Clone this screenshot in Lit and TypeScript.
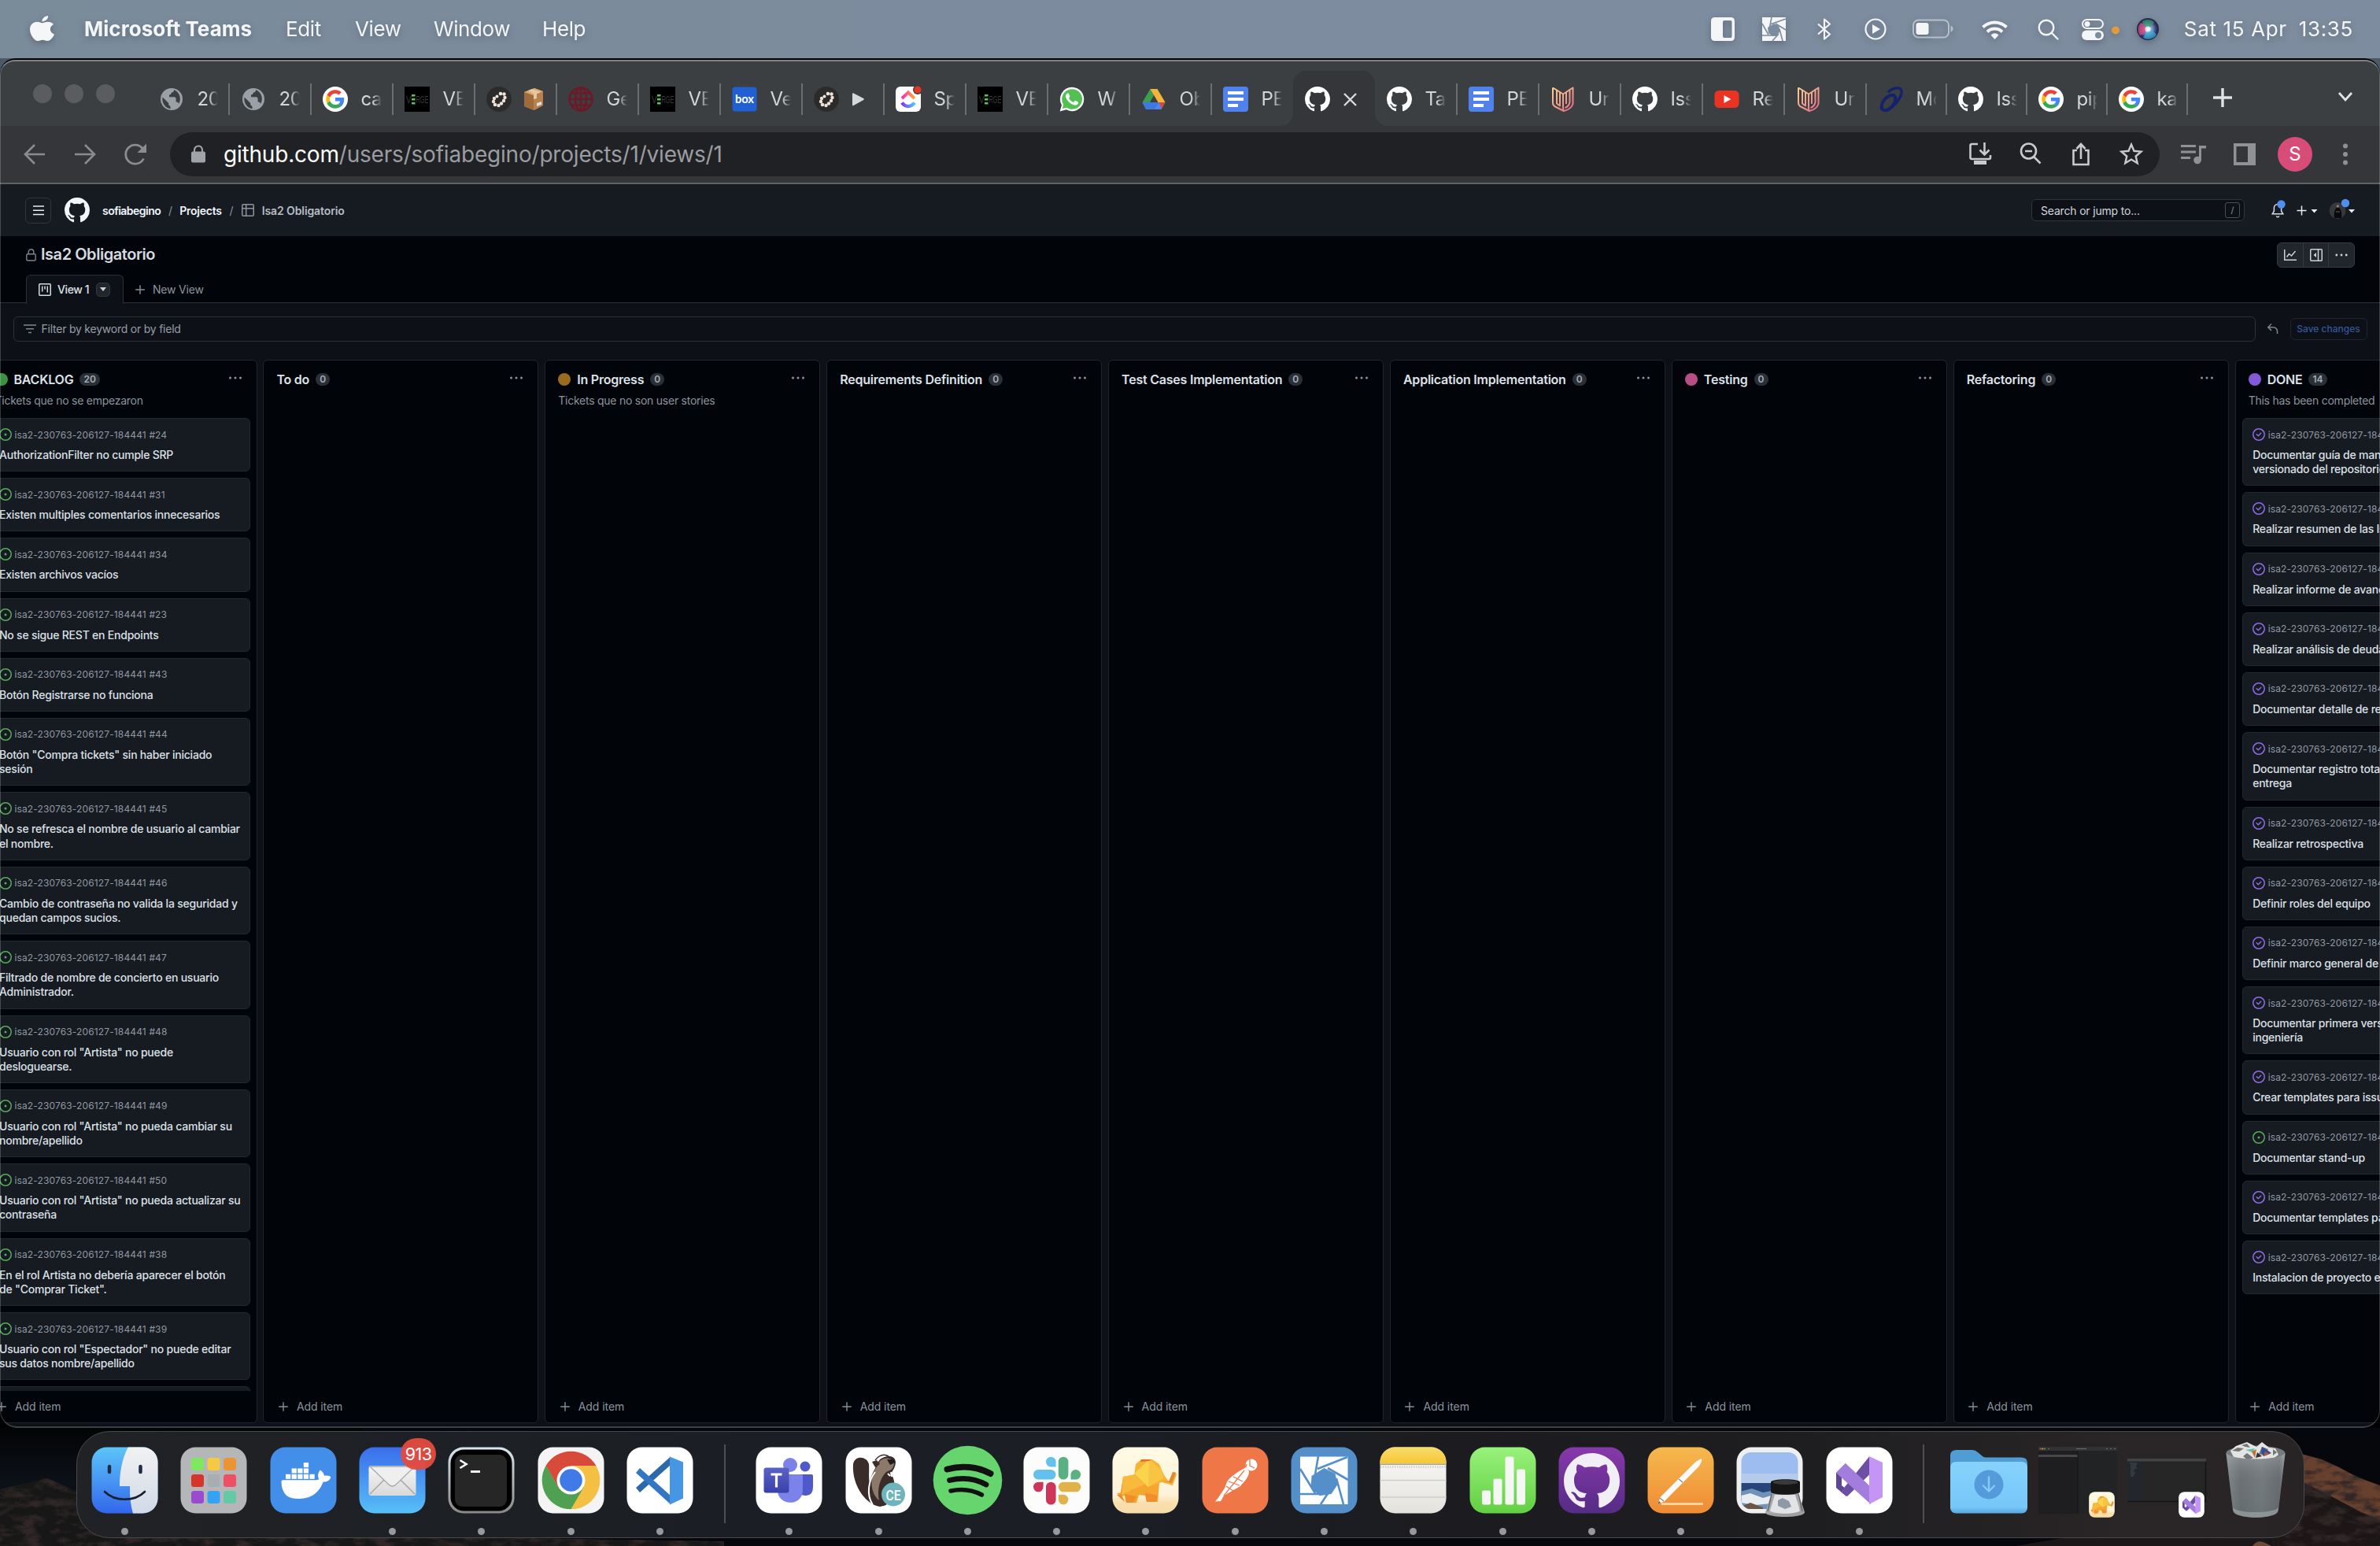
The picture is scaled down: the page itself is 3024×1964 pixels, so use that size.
import { LitElement, html, css, svg, nothing } from "lit";
import { customElement, property } from "lit/decorators.js";

/* ---------- shared glyphs ---------- */

const OCTOCAT =
  "M8 0c4.42 0 8 3.58 8 8a8.013 8.013 0 0 1-5.45 7.59c-.4.08-.55-.17-.55-.38 0-.27.01-1.13.01-2.2 0-.75-.25-1.23-.54-1.48 1.78-.2 3.65-.88 3.65-3.95 0-.88-.31-1.59-.82-2.15.08-.2.36-1.02-.08-2.12 0 0-.67-.22-2.2.82-.64-.18-1.32-.27-2-.27-.68 0-1.36.09-2 .27-1.53-1.03-2.2-.82-2.2-.82-.44 1.1-.16 1.92-.08 2.12-.51.56-.82 1.28-.82 2.15 0 3.06 1.86 3.75 3.64 3.95-.23.2-.44.55-.51 1.07-.46.21-1.61.55-2.33-.66-.15-.24-.6-.83-1.23-.82-.67.01-.27.38.01.53.34.19.73.9.82 1.13.16.45.68 1.31 2.69.94 0 .67.01 1.3.01 1.49 0 .21-.15.45-.55.38A7.995 7.995 0 0 1 0 8c0-4.42 3.58-8 8-8Z";

const octocat = (size: number, color = "#fff") =>
  html`<svg width=${size} height=${size} viewBox="0 0 16 16"><path fill=${color} d=${OCTOCAT} /></svg>`;

const issueOpen = html`<svg width="16" height="16" viewBox="0 0 16 16" fill="#57ab5a">
  <path d="M8 9.5a1.5 1.5 0 1 0 0-3 1.5 1.5 0 0 0 0 3Z" />
  <path d="M8 0a8 8 0 1 1 0 16A8 8 0 0 1 8 0ZM1.5 8a6.5 6.5 0 1 0 13 0 6.5 6.5 0 0 0-13 0Z" />
</svg>`;

const issueClosed = html`<svg width="16" height="16" viewBox="0 0 16 16" fill="#8f6be8">
  <path d="M11.28 6.78a.75.75 0 0 0-1.06-1.06L7.25 8.69 5.78 7.22a.75.75 0 0 0-1.06 1.06l2 2a.75.75 0 0 0 1.06 0l3.5-3.5Z" />
  <path d="M16 8A8 8 0 1 1 0 8a8 8 0 0 1 16 0Zm-1.5 0a6.5 6.5 0 1 0-13 0 6.5 6.5 0 0 0 13 0Z" />
</svg>`;

const kebab = html`<svg width="16" height="16" viewBox="0 0 16 16" fill="#8b949e">
  <circle cx="1.5" cy="8" r="1.5" /><circle cx="8" cy="8" r="1.5" /><circle cx="14.5" cy="8" r="1.5" />
</svg>`;

const plus = (color = "#858e99") => html`<svg width="16" height="16" viewBox="0 0 16 16">
  <path d="M8 2.2v11.6M2.2 8h11.6" stroke=${color} stroke-width="1.4" fill="none" />
</svg>`;

/* ---------- favicons ---------- */

const fav = {
  globe: html`<svg width="32" height="32" viewBox="0 0 32 32">
    <circle cx="16" cy="16" r="14" fill="#9aa0a6" />
    <path d="M4.6 13.6l7.6 7.4v2l2.3 2.4v2.9A12.4 12.4 0 0 1 4.6 13.6zM19 4c.4 2.600-1.600 3.200-3 3.600-.6 1.800-1.200 3-3 3v2.600h6.600c1.500 0 2 1.200 2 2.600v3.600c2 0 3 .6 3.600 2.400A12.500 12.500 0 0 0 19 4z" fill="#3c3f42" />
  </svg>`,
  google: html`<svg width="32" height="32" viewBox="0 0 32 32">
    <circle cx="16" cy="16" r="16" fill="#fff" />
    <g transform="translate(4.200 4.200) scale(.49)">
      <path fill="#ea4335" d="M24 9.5c3.54 0 6.71 1.22 9.21 3.6l6.85-6.85C35.9 2.38 30.47 0 24 0 14.62 0 6.51 5.38 2.56 13.22l7.98 6.19C12.43 13.72 17.74 9.5 24 9.5z" />
      <path fill="#4285f4" d="M46.98 24.55c0-1.57-.15-3.09-.38-4.55H24v9.02h12.94c-.58 2.96-2.26 5.48-4.78 7.18l7.73 6c4.51-4.18 7.09-10.36 7.09-17.65z" />
      <path fill="#fbbc05" d="M10.53 28.59c-.48-1.45-.76-2.99-.76-4.59s.27-3.14.76-4.59l-7.98-6.19C.92 16.46 0 20.12 0 24c0 3.88.92 7.54 2.56 10.78l7.97-6.19z" />
      <path fill="#34a853" d="M24 48c6.48 0 11.93-2.13 15.89-5.81l-7.73-6c-2.15 1.45-4.92 2.3-8.16 2.3-6.26 0-11.57-4.22-13.47-9.91l-7.98 6.19C6.51 42.62 14.62 48 24 48z" />
    </g>
  </svg>`,
  verge: html`<svg width="32" height="32" viewBox="0 0 32 32">
    <rect width="32" height="32" fill="#000" />
    <text x="2" y="21" font-family="Liberation Sans" font-size="13" fill="#3a3a3a" textLength="6.500" lengthAdjust="spacingAndGlyphs">V</text>
    <g fill="#57c84a"><rect x="9" y="10" width="4.500" height="2.500" /><rect x="9" y="15" width="4.500" height="2.500" /><rect x="9" y="20" width="4.500" height="2.500" /></g>
    <text x="14.500" y="21" font-family="Liberation Sans" font-size="13" fill="#3a3a3a" textLength="16" lengthAdjust="spacingAndGlyphs">RGE</text>
  </svg>`,
  beads: html`<svg width="32" height="32" viewBox="0 0 32 32">
    <circle cx="16" cy="16" r="16" fill="#2b2b2b" />
    <g fill="#efe3d6">
      <circle cx="18" cy="9" r="2.300" /><circle cx="22.500" cy="9.500" r="2.200" /><circle cx="23.500" cy="14" r="2.200" /><circle cx="22" cy="18" r="2.200" />
      <circle cx="19" cy="21.500" r="2.200" /><circle cx="15.500" cy="24" r="2.200" /><circle cx="11" cy="23" r="2.300" /><circle cx="9" cy="19" r="2.200" />
      <circle cx="10" cy="15" r="2.200" /><circle cx="13.500" cy="12.500" r="2" />
    </g>
  </svg>`,
  redGlobe: html`<svg width="32" height="32" viewBox="0 0 32 32" fill="none" stroke="#6b1a28" stroke-width="2.600">
    <circle cx="16" cy="16" r="14.500" /><ellipse cx="16" cy="16" rx="7" ry="14.500" /><path d="M16 1.500v29M2 16h28M4 8.500h24M4 23.500h24" />
  </svg>`,
  box: html`<svg width="32" height="32" viewBox="0 0 32 32">
    <rect x=".500" y=".500" width="31" height="31" rx="4" fill="#2160d3" />
    <text x="16" y="20.500" text-anchor="middle" font-family="Lato" font-weight="700" font-size="14.500" fill="#fff" textLength="24" lengthAdjust="spacingAndGlyphs">box</text>
  </svg>`,
  clickup: html`<svg width="34" height="32" viewBox="0 0 34 32">
    <defs>
      <linearGradient id="cu1" x1="0" x2="1"><stop offset="0" stop-color="#f62ac0" /><stop offset="1" stop-color="#fdae2d" /></linearGradient>
      <linearGradient id="cu2" x1="0" x2="1"><stop offset="0" stop-color="#8930fd" /><stop offset="1" stop-color="#49ccf9" /></linearGradient>
    </defs>
    <rect width="32" height="32" rx="6" fill="#fff" />
    <path d="M8 15l8-7.500 8 7.500" stroke="url(#cu1)" stroke-width="4" fill="none" />
    <path d="M8 20.500c4.500 6 11.500 6 16 0" stroke="url(#cu2)" stroke-width="4.500" fill="none" />
    <circle cx="28" cy="4" r="6" fill="#3c3f42" /><circle cx="28" cy="4" r="4.500" fill="#ea3323" />
  </svg>`,
  whatsapp: html`<svg width="32" height="32" viewBox="0 0 24 24">
    <path d="M12 .6A11.400 11.400 0 0 0 2.200 17.700L.5 23.600l6.100-1.600A11.400 11.400 0 1 0 12 .6z" fill="#fff" />
    <path d="M12 2.400a9.600 9.600 0 0 0-8.100 14.700l-1 3.900 4-1A9.600 9.600 0 1 0 12 2.400z" fill="#52c152" />
    <path fill="#fff" d="M17.472 14.382c-.297-.149-1.758-.867-2.03-.967-.273-.099-.471-.148-.67.15-.197.297-.767.966-.94 1.164-.173.199-.347.223-.644.075-.297-.15-1.255-.463-2.39-1.475-.883-.788-1.48-1.761-1.653-2.059-.173-.297-.018-.458.13-.606.134-.133.298-.347.446-.52.149-.174.198-.298.298-.497.099-.198.05-.371-.025-.52-.075-.149-.669-1.612-.916-2.207-.242-.579-.487-.5-.669-.51-.173-.008-.371-.01-.57-.01-.198 0-.52.074-.792.372-.272.297-1.04 1.016-1.04 2.479 0 1.462 1.065 2.875 1.213 3.074.149.198 2.096 3.2 5.077 4.487.709.306 1.262.489 1.694.625.712.227 1.36.195 1.871.118.571-.085 1.758-.719 2.006-1.413.248-.694.248-1.289.173-1.413-.074-.124-.272-.198-.57-.347" />
  </svg>`,
  drive: html`<svg width="32" height="32" viewBox="0 0 32 32">
    <path d="M11.500 3h9L11 20 6 28.500 1.500 20z" fill="#3c9d52" />
    <path d="M11.500 3h9L30.500 20h-9z" fill="#f4b43a" />
    <path d="M1.500 20h20l-2 4-2 5H6z" fill="#3f78e0" /><path d="M21.500 20h9l-5 9H17z" fill="#4c86ee" /><path d="M22.500 20h8l-4.500 8z" fill="#d8493a" />
  </svg>`,
  docs: html`<svg width="32" height="32" viewBox="0 0 32 32">
    <rect width="32" height="32" rx="4" fill="#4f82ec" />
    <path d="M6 8h20M6 16h20M6 24h13" stroke="#fff" stroke-width="4" />
  </svg>`,
  octocat: octocat(32),
  ribbon: html`<svg width="32" height="32" viewBox="0 0 32 32" fill="none" stroke-width="2">
    <defs><linearGradient id="rb" gradientUnits="userSpaceOnUse" x1="2" y1="2" x2="28" y2="30"><stop offset="0" stop-color="#fbd08f" /><stop offset=".5" stop-color="#f2a08c" /><stop offset="1" stop-color="#ec6a8b" /></linearGradient></defs>
    <g stroke="url(#rb)" stroke-linejoin="round">
      <path d="M3 1.500v19q0 4 5 6l9 4.500q9-2 11.500-9V1.500l-4 2.500v16q-1 5-6 7" />
      <path d="M3 1.500l5 3v17l4 3V7L8 4.500M12 7l4 2.500v17q0 3 1 4.500M24.500 4L20 7v15M20 7l-4 2.500" />
    </g>
  </svg>`,
  youtube: html`<svg width="32" height="32" viewBox="0 0 32 32">
    <rect x=".500" y="5" width="31" height="22" rx="5.500" fill="#ea3323" /><path d="M12.500 11l9 5-9 5z" fill="#fff" />
  </svg>`,
  ring: html`<svg width="32" height="32" viewBox="0 0 32 32" fill="none" stroke="#14226b">
    <ellipse cx="13.500" cy="20.500" rx="6.500" ry="11.500" transform="rotate(40 13.500 20.500)" stroke-width="4" />
    <path d="M13 7.500c4-5 14-8 16.500-3.500 3 6-6 20-18 26.500" stroke-width="3.400" />
  </svg>`,
};

const boxTitle = html`<svg width="26" height="30" viewBox="0 0 26 30">
  <path d="M1 6l13-5 11 4v18l-11 6L1 24z" fill="#b8804d" /><path d="M1 6l12 4v19L1 24z" fill="#a06b3c" />
  <path d="M1 6l13-5 11 4-12 5z" fill="#d9a874" /><path d="M6 4l5-2 11 4-5 2v6l-4 1V8z" fill="#e8c79b" />
  <path d="M17 20l6-2v4l-6 2z" fill="#ddd" />
</svg>`;
const playTitle = html`<svg width="20" height="30" viewBox="0 0 20 30"><path d="M2 8.500q0-1.800 1.600-1l12.600 6.500q1.500 1 0 2L3.600 23Q2 23.800 2 22z" fill="#d5d7d9" /></svg>`;

type Tab = { icon: unknown; text?: unknown; active?: boolean; narrow?: boolean; bare?: boolean };
const tabs: Tab[] = [
  { icon: fav.globe, text: "20" },
  { icon: fav.globe, text: "20" },
  { icon: fav.google, text: "ca" },
  { icon: fav.verge, text: "VE" },
  { icon: fav.beads, text: boxTitle },
  { icon: fav.redGlobe, text: "Ge" },
  { icon: fav.verge, text: "VE" },
  { icon: fav.box, text: "Ve" },
  { icon: fav.beads, text: playTitle },
  { icon: fav.clickup, text: "Sp" },
  { icon: fav.verge, text: "VE" },
  { icon: fav.whatsapp, text: "W" },
  { icon: fav.drive, text: "Ob" },
  { icon: fav.docs, text: "PE", bare: true },
  { icon: fav.octocat, active: true },
  { icon: fav.octocat, text: "Ta" },
  { icon: fav.docs, text: "PE" },
  { icon: fav.ribbon, text: "Ur" },
  { icon: fav.octocat, text: "Iss" },
  { icon: fav.youtube, text: "Re" },
  { icon: fav.ribbon, text: "Ur" },
  { icon: fav.ring, text: "Mo", narrow: true },
  { icon: fav.octocat, text: "Iss", narrow: true },
  { icon: fav.google, text: "pip", narrow: true },
  { icon: fav.google, text: "ka", narrow: true },
];

/* ---------- dock artwork, drawn on an 85 unit tile ---------- */

const tile = (fill: string) => svg`<rect x=".5" y=".5" width="84" height="84" rx="19" fill=${fill} />`;

const elephantArt = svg`
  <path d="M14 38l22-4 10 14 14-2-2 24H44l-2-8-8-1-3 10H18l-2-9-5 1-5-4 6-1z" fill="#f6a62f"/>
  <path d="M14 38l22-4 10 12-20 8-15 8z" fill="#f8b93c"/><path d="M14 38l-3 20 5 12-10-9 6-1z" fill="#e98a25"/>
  <path d="M30 22l7-6h14l9 6 6 14 6 8 6-8-2-3 4-1 2 3-5 14-14-4-17 6-18-14z" fill="#f6b437"/>
  <path d="M28 34l19-18 16 14-17 21z" fill="#fbd34c"/><path d="M47 16l16 14 2 10-19 11z" fill="#f8c443"/>
  <path d="M37 16h13l-3 2-11 1z" fill="#e2702a"/><path d="M72 44l5-12 4 1-5 13-14-3z" fill="#e98730"/>
  <path d="M16 60l15 3-4 8h-9zM42 58l16 4-2 8H44z" fill="#ee8f2c"/>`;

const vsArt = svg`
  <path d="M13 33l12-12v13l-5 4v11l6 5v9L13 52z" fill="#5f4595"/>
  <path d="M55 12.500v23L27 63l-8-6z" fill="#6b4fa5"/>
  <path d="M25 21l32 30v22L13 33z" fill="#a37ddd"/>
  <path d="M55 12l17 8v44l-17 9z" fill="#c495f5"/>`;

const art: Record<string, unknown> = {
  finder: svg`
    <defs><linearGradient id="fa" x1="0" y1="0" x2="0" y2="1"><stop offset="0" stop-color="#5cc6f8"/><stop offset="1" stop-color="#3366ec"/></linearGradient>
    <linearGradient id="fb" x1="0" y1="0" x2="0" y2="1"><stop offset="0" stop-color="#f2f1f2"/><stop offset="1" stop-color="#d0dae8"/></linearGradient>
    <clipPath id="fc"><rect x=".5" y=".5" width="84" height="84" rx="19"/></clipPath></defs>
    <g clip-path="url(#fc)"><rect width="85" height="85" fill="url(#fa)"/>
    <path d="M47 0C39 15 36 32 36 50h13c-.5 12 1 24 4 35h32V0z" fill="url(#fb)"/></g>
    <path d="M23 25v7M62.500 25v7" stroke="#1f2d44" stroke-width="4.500" stroke-linecap="round"/>
    <path d="M17 57c13 13 38 13 51 0" stroke="#16202e" stroke-width="2.600" fill="none" stroke-linecap="round"/>`,
  launchpad: svg`${tile("#b5b6b8")}
    ${[["#7fe85f", "#f5c945", "#ea9436"], ["#d6362a", "#a7adb0", "#ef4f63"], ["#9a4bd0", "#35a3f4", "#66c9a5"]].map((row, r) =>
      row.map((c, i) => svg`<rect x=${14 + i * 20.5} y=${14 + r * 21} width="16" height="16" rx="3.500" fill=${c}/>`))}`,
  docker: svg`${tile("#438ee8")}
    <g fill="#fff" transform="translate(14.500 12) scale(2.620)">
      <path d="M23.763 9.89c-.065-.051-.672-.51-1.954-.51-.338.001-.676.03-1.01.087-.248-1.7-1.653-2.53-1.716-2.566l-.344-.199-.226.327c-.284.438-.49.922-.612 1.43-.23.97-.09 1.882.403 2.661-.595.332-1.55.413-1.744.42H.751a.751.751 0 00-.75.748 11.376 11.376 0 00.692 4.062c.545 1.428 1.355 2.48 2.41 3.124 1.18.723 3.1 1.137 5.275 1.137.983.003 1.963-.086 2.93-.266a12.248 12.248 0 003.823-1.389c.98-.567 1.86-1.288 2.61-2.136 1.252-1.418 1.998-2.997 2.553-4.4h.221c1.372 0 2.215-.549 2.68-1.009.309-.293.55-.65.707-1.046l.098-.288Z"/>
      ${[2.1, 5, 7.9, 10.8, 13.7].map((x) => svg`<rect x=${x} y="8.700" width="2.400" height="2.300"/>`)}
      ${[5, 7.9, 10.8].map((x) => svg`<rect x=${x} y="5.900" width="2.400" height="2.300"/>`)}
      <rect x="10.800" y="3.100" width="2.400" height="2.300"/>
    </g>`,
  mail: svg`<defs><linearGradient id="ml" x1="0" y1="0" x2="0" y2="1"><stop offset="0" stop-color="#3a6eec"/><stop offset="1" stop-color="#57bff8"/></linearGradient>
    <linearGradient id="mm" x1="0" y1="0" x2="0" y2="1"><stop offset="0" stop-color="#f6f6f6"/><stop offset="1" stop-color="#d9d9da"/></linearGradient></defs>
    ${tile("url(#ml)")}
    <rect x="12.500" y="24" width="60" height="38" rx="3.500" fill="url(#mm)"/>
    <path d="M14 60l19-19M71 60L52 41" stroke="#a9a9aa" stroke-width="1.600"/>
    <path d="M14 25l24 23q4.500 4 9 0l24-23z" fill="#efefef" stroke="#a9a9aa" stroke-width="1.300"/>`,
  terminal: svg`<defs><linearGradient id="tm" x1="0" y1="0" x2="0" y2="1"><stop offset="0" stop-color="#d5e8ef"/><stop offset="1" stop-color="#8a8686"/></linearGradient></defs>
    ${tile("url(#tm)")}<rect x="3.500" y="3.500" width="78" height="78" rx="17" fill="#000"/><rect x="9" y="10" width="66" height="66" rx="9" fill="#262626"/>
    <path d="M15.500 17l8 5-8 5" stroke="#fff" stroke-width="2.600" fill="none"/><path d="M29 31.500h12" stroke="#fff" stroke-width="2.800"/>`,
  chrome: svg`${tile("#f4f4f4")}
    <path d="M42.500 42.500L10.600 24.100A36.800 36.800 0 0 1 74.400 24.100z" fill="#d84a3a"/>
    <path d="M42.500 42.500L74.400 24.100A36.800 36.800 0 0 1 42.500 79.300L57 51z" fill="#f3c043"/>
    <path d="M42.500 42.500L26 51 10.600 24.100A36.800 36.800 0 0 0 42.500 79.300L58.500 51.500z" fill="#4fa052"/>
    <path d="M42.500 24.100h31.900L58 46z" fill="#f3c043"/><path d="M42.500 24.100L26.500 51.700 10.600 24.100z" fill="#d84a3a"/><path d="M10.600 24.100L26.500 51.700l-6 7-12-22z" fill="#4fa052"/>
    <circle cx="42.500" cy="42.500" r="18" fill="#fff"/><circle cx="42.500" cy="42.500" r="14.300" fill="#4079e8"/>`,
  vscode: svg`${tile("#fff")}
    <path d="M12 52l5 6 39-35V12.500z" fill="#2b69ab"/><path d="M12 33l5-6 39 35v11z" fill="#3277c4"/><path d="M55 12.500l17 7v46l-17 8z" fill="#4796e6"/>
    <path d="M55 26v33L36 42.500z" fill="#fff"/>`,
  teams: svg`<defs><linearGradient id="tt" x1="0" y1="0" x2="0" y2="1"><stop offset="0" stop-color="#5a62c3"/><stop offset="1" stop-color="#3940ab"/></linearGradient></defs>
    ${tile("#fff")}
    <circle cx="63" cy="25" r="6.500" fill="#5059c9"/><path d="M54 35h17q2 0 2 2v14q0 11-9 11-10 0-10-10z" fill="#5059c9"/>
    <circle cx="44" cy="23" r="9" fill="#7b83eb"/><path d="M28 35h30q2 0 2 2v18c0 21-32 21-32 0z" fill="#7b83eb"/>
    <rect x="10.500" y="26.500" width="32" height="32" rx="3" fill="url(#tt)"/>
    <path d="M19.500 35h14M26.500 35v16.500" stroke="#fff" stroke-width="3.200"/>`,
  dbeaver: svg`${tile("#fff")}
    <path d="M10 22c2-12 18-10 20 0 1 12-2 20 4 34l12 20c-18 0-38-26-36-54z" fill="#3a2d29"/>
    <path d="M44 16c8-6 20-6 20 4-1 10-6 10-5 16 6 8 6 34-10 39-10 3-18-9-18-24 0-16 8-22 8-28z" fill="#3a2d29"/>
    <path d="M44 18c6-6 16-4 18 2 0 9-6 10-10 12-8 8-12 22-9 36-8-6-12-20-8-32 2-8 7-12 9-18z" fill="#8b7969"/>
    <path d="M38 32c-8 10-12 28-3 42" stroke="#fff" stroke-width="2" fill="none"/>
    <path d="M53 16h9l1 4-6 3z" fill="#231b19"/><path d="M34 19l6-2 4 5-6 4z" fill="#3a2d29"/><path d="M38 17q8-10 17-5" stroke="#3a2d29" stroke-width="1.500" fill="none"/>
    <path d="M58 32l1 6M54 34l3 3" stroke="#fff" stroke-width="2"/>
    <circle cx="61" cy="60.500" r="15" fill="#6db4bd"/><text x="61" y="67.500" text-anchor="middle" font-family="Roboto" font-size="19" font-weight="500" fill="#fff" textLength="19" lengthAdjust="spacingAndGlyphs">CE</text>`,
  spotify: svg`<circle cx="42.500" cy="42.500" r="43.800" fill="#67d56e"/>
    <g stroke="#111" fill="none" stroke-linecap="round"><path d="M16.500 28.500c18-5 38-3.500 55 5.500" stroke-width="8"/><path d="M19.500 42.500c16-4 32-2.500 46.500 5.500" stroke-width="6.800"/><path d="M21 56c14-3 27-1.500 39.500 5" stroke-width="5.500"/></g>`,
  slack: svg`${tile("#fcfcfc")}
    <g fill="#64c1eb"><path d="M29 19a6.300 6.300 0 1 1 12.600 0v6.500h-6.300A6.300 6.300 0 0 1 29 19z"/><rect x="13" y="29" width="28.500" height="12.600" rx="6.300"/></g>
    <g fill="#59b183"><rect x="44.800" y="12.700" width="12.600" height="28.800" rx="6.300"/><path d="M60.500 35.200a6.300 6.300 0 1 1 6.300 6.300h-6.300z"/></g>
    <g fill="#cd3559"><path d="M13 51a6.300 6.300 0 0 1 6.300-6.300h6.300V51A6.300 6.300 0 1 1 13 51z"/><rect x="29" y="44.700" width="12.600" height="28.800" rx="6.300"/></g>
    <g fill="#e1b24a"><rect x="44.800" y="44.700" width="28.500" height="12.600" rx="6.300"/><path d="M44.800 60.700h6.300a6.300 6.300 0 1 1-6.300 6.300z"/></g>`,
  elephant: svg`<defs><linearGradient id="el" x1="0" y1="0" x2="0" y2="1"><stop offset="0" stop-color="#fffae4"/><stop offset=".72" stop-color="#fdf3da"/><stop offset=".84" stop-color="#f9dfae"/><stop offset="1" stop-color="#f7dca8"/></linearGradient></defs>
    ${tile("url(#el)")}${elephantArt}`,
  postman: svg`${tile("#ee7647")}
    <circle cx="63" cy="23" r="7.500" fill="#fff"/><path d="M61 16v8l6 3M57 22l-2 6" stroke="#ee7647" stroke-width="1.300" fill="none"/>
    <path d="M56 26l4 5c0 8-7 14-11 19L28 62l-4 7-7 .5 4-5 8-12c2-4 2-8 6-12 6-6 15-11 21-14.500z" fill="#fff"/>
    <path d="M54 30L28 62M34 44l14 5M40 38l12 6M31 50l9 6" stroke="#ee7647" stroke-width="1.200" fill="none"/>`,
  shutter: svg`${tile("#548fca")}
    <path d="M12 12.500h60.500v60.500H12z" fill="#fff"/><path d="M42.500 27l14 7 3 14-8 12-15 2-11-10 1-15z" fill="#548fca"/>
    <path d="M35 12l-5 29M72 13L34 28M73 42L47 27M67 73l-9-33M38 73l18-27M12 60h36M31 59L12 28" stroke="#548fca" stroke-width="2.600"/>`,
  notes: svg`<defs><clipPath id="nc"><rect x=".5" y=".5" width="84" height="84" rx="19"/></clipPath><linearGradient id="ng" x1="0" y1="0" x2="0" y2="1"><stop offset="0" stop-color="#f9dc6b"/><stop offset="1" stop-color="#f6c736"/></linearGradient>
    <linearGradient id="nh" x1="0" y1="0" x2="0" y2="1"><stop offset="0" stop-color="#fafaf9"/><stop offset="1" stop-color="#e3e2dd"/></linearGradient></defs>
    <g clip-path="url(#nc)"><rect width="85" height="85" fill="url(#nh)"/><rect width="85" height="21.500" fill="url(#ng)"/><rect y="21.500" width="85" height="1.500" fill="#a8a493"/>
    <path d="M1 25.500h83" stroke="#c4c3be" stroke-width="2" stroke-dasharray="1.400 1.600"/><path d="M0 42.500h85M0 64h85" stroke="#cfcecb" stroke-width="1.500"/></g>`,
  numbers: svg`<defs><linearGradient id="nu" x1="0" y1="0" x2="0" y2="1"><stop offset="0" stop-color="#98f27a"/><stop offset="1" stop-color="#62cf43"/></linearGradient></defs>
    ${tile("url(#nu)")}<g fill="#f5f7f5"><rect x="16" y="55.500" width="11" height="18" rx="2"/><rect x="30.500" y="40.500" width="11" height="33" rx="2"/><rect x="45.500" y="12.500" width="11" height="61" rx="2"/><rect x="60" y="28.500" width="11" height="45" rx="2"/></g>`,
  github: svg`<defs><linearGradient id="gh" x1="0" y1="0" x2="0" y2="1"><stop offset="0" stop-color="#8838ab"/><stop offset="1" stop-color="#552c85"/></linearGradient></defs>
    ${tile("url(#gh)")}<g transform="translate(7 8) scale(4.440)"><path fill="#f1eff5" d=${OCTOCAT} /></g>`,
  pages: svg`<defs><linearGradient id="pg" x1="0" y1="0" x2="0" y2="1"><stop offset="0" stop-color="#f5b94d"/><stop offset="1" stop-color="#ef8b35"/></linearGradient></defs>
    ${tile("url(#pg)")}<path d="M18 72.500h53" stroke="#fbd49b" stroke-width="3"/>
    <path d="M13.500 73l3-9 43-43c4-4 8-6 9.500-5.500.8 2-1 6-4 10L22 69z" fill="#fafafa"/><path d="M40 41l5 4M16 65l5 4" stroke="#8d8d8d" stroke-width="1.500"/><path d="M13.500 73l1.500-4 2 2z" fill="#555"/>`,
  preview: svg`<defs><clipPath id="pv"><rect x="6.500" y="7" width="72" height="72" rx="12"/></clipPath></defs>
    ${tile("#efefef")}
    <g clip-path="url(#pv)"><rect width="85" height="46" fill="#9dbdf0"/><rect y="34" width="85" height="12" fill="#b5cbec"/><rect y="46" width="85" height="40" fill="#274578"/>
    <path d="M0 58l20-5 14 5 20-4v30H0z" fill="#6f93b8"/><path d="M6 62l12-3 16 6 10-3v10l-20 2-18-3z" fill="#e8edf2"/><path d="M6 76l12-5 16 6v4H6z" fill="#6a5646"/></g>
    <path d="M45 59h34l8 24c0 8-50 8-50 0z" fill="#a5a7aa" opacity=".95"/><path d="M49 61h26l6 20c-4 5-34 5-38 0z" fill="#e2e3e4"/><path d="M53 68l6-3 8 4 3 7-8 3-9-4z" fill="#8d99a5"/><path d="M45 60l-5 22M79 60l5 22" stroke="#5c5e60" stroke-width="1.200"/>
    <path d="M44 45c0-5 37-5 37 0v12c0 5-37 5-37 0z" fill="#161616"/><ellipse cx="62.500" cy="45" rx="16" ry="3" fill="#3a3a3a"/>`,
  vs: svg`${tile("#fff")}${vsArt}`,
};

const downloads = html`<svg class="folder" width="98" height="82" viewBox="0 0 98 82">
  <defs><linearGradient id="dl" x1="0" y1="0" x2="0" y2="1"><stop offset="0" stop-color="#86d2fb" /><stop offset=".88" stop-color="#76c6f8" /><stop offset="1" stop-color="#57a6dd" /></linearGradient></defs>
  <path d="M0 8q0-7 8-7h20q4 0 7 3l6 5q2 1.500 5 1.500h44q8 0 8 7V40H0z" fill="#509dd6" />
  <rect y="16" width="98" height="65.500" rx="7" fill="url(#dl)" />
  <circle cx="49" cy="45" r="18.500" fill="#559bdb" /><path d="M49 35.500v17M42 46.500l7 7 7-7" stroke="#84cdf9" stroke-width="2.400" fill="none" stroke-linecap="round" stroke-linejoin="round" />
</svg>`;

const trash = html`<svg class="trash" width="76" height="99" viewBox="0 0 76 99">
  <defs>
    <linearGradient id="tr" x1="0" x2="1"><stop offset="0" stop-color="#8e9598" /><stop offset=".25" stop-color="#70777a" /><stop offset=".6" stop-color="#7d8487" /><stop offset=".9" stop-color="#6a7073" /><stop offset="1" stop-color="#949b9e" /></linearGradient>
    <linearGradient id="ts" x1="0" y1="0" x2="0" y2="1"><stop offset="0" stop-color="#aab0b3" stop-opacity=".5" /><stop offset=".4" stop-color="#5b6164" stop-opacity=".25" /><stop offset="1" stop-color="#4f5659" stop-opacity=".35" /></linearGradient>
  </defs>
  <ellipse cx="38" cy="16" rx="37.500" ry="9.500" fill="#747a7d" />
  <path d="M6 13l7-6 14-5 12 6 7-6 9 7 8 1 4 8-12 9-30 2-14-6z" fill="#e4e4e4" />
  <path d="M8 13l7-4 8 1-6 4zM20 6l7-2 4 5-6-1zM46 8l8 3-5 8-7-2zM60 11l5 4-5 4zM22 20l5-4 8 6-7 3z" fill="#757575" /><path d="M25 12l12-2-3 5z" fill="#5fc7a8" /><path d="M33 14l6-3-2 11z" fill="#c2703a" /><path d="M46 8l8 5 4 3-10 4-3-5z" fill="#2d4f9c" /><path d="M50 14l6 3-8 3z" fill="#b5552e" /><path d="M40 15l-2 7 8-2z" fill="#333" />
  <path d="M.5 16c8 10 67 10 75 0L67 88c-3 13-55 13-58 0z" fill="url(#tr)" />
  <path d="M.5 16c8 10 67 10 75 0L67 88c-3 13-55 13-58 0z" fill="url(#ts)" />
  <path d="M9 85c5 8 53 8 58 0l-.8 6c-5 9-51 9-56.400 0z" fill="#a3abae" opacity=".6" />
</svg>`;

const miniElephant = html`<svg class="mini-badge" width="33" height="33" viewBox="0 0 85 85">${art.elephant}</svg>`;
const miniVs = html`<svg class="mini-badge" width="33" height="33" viewBox="0 0 85 85">${art.vs}</svg>`;

const miniFinder = html`<svg width="100" height="85" viewBox="0 0 100 85">
  <rect width="100" height="85" fill="#212324" /><rect width="50" height="85" fill="#1e1e20" /><rect width="100" height="5" fill="#303233" />
  <rect y="10" width="50" height="3" fill="#45474a" /><path d="M50 5v80" stroke="#141415" />
  <circle cx="2.500" cy="2.500" r="1.100" fill="#d8463c" /><circle cx="5.200" cy="2.500" r="1.100" fill="#d9a732" /><circle cx="7.900" cy="2.500" r="1.100" fill="#43a843" />
  <path d="M48 2.500h13M86 2.500h2M91 2.500h2M96 2.500h2M12 2.500h2" stroke="#6a6c6e" />
</svg>`;
const miniEditor = html`<svg width="100" height="85" viewBox="0 0 100 85">
  <g transform="translate(0 15)"><rect width="100" height="55" fill="#262627" /><rect width="20" height="55" fill="#23262c" /><rect width="100" height="3.500" fill="#434346" /><path d="M0 54.500h100M99.500 4v50" stroke="#151517" stroke-width="1.500" />
  <path d="M3 6h9M4 8h8M4 10h7M4 12h8M4 14h5M4 16h4M4 18h6M4 20h5M4 22h4" stroke="#424858" /></g>
</svg>`;

/* ---------- board data ---------- */

type Card = { id: string; lines: string[]; open?: boolean };
type Column = { name: string; count: number; dot?: string; desc?: string; cards?: Card[] };

const REPO = "isa2-230763-206127-184441";
const backlog: Card[] = [
  { id: "#24", lines: ["AuthorizationFilter no cumple SRP"] },
  { id: "#31", lines: ["Existen multiples comentarios innecesarios"] },
  { id: "#34", lines: ["Existen archivos vacíos"] },
  { id: "#23", lines: ["No se sigue REST en Endpoints"] },
  { id: "#43", lines: ["Botón Registrarse no funciona"] },
  { id: "#44", lines: ['Botón "Compra tickets" sin haber iniciado', "sesión"] },
  { id: "#45", lines: ["No se refresca el nombre de usuario al cambiar", "el nombre."] },
  { id: "#46", lines: ["Cambio de contraseña no valida la seguridad y", "quedan campos sucios."] },
  { id: "#47", lines: ["Filtrado de nombre de concierto en usuario", "Administrador."] },
  { id: "#48", lines: ['Usuario con rol "Artista" no puede', "desloguearse."] },
  { id: "#49", lines: ['Usuario con rol "Artista" no pueda cambiar su', "nombre/apellido"] },
  { id: "#50", lines: ['Usuario con rol "Artista" no pueda actualizar su', "contraseña"] },
  { id: "#38", lines: ["En el rol Artista no debería aparecer el botón", 'de "Comprar Ticket".'] },
  { id: "#39", lines: ['Usuario con rol "Espectador" no puede editar', "sus datos nombre/apellido"] },
  { id: "", lines: [] },
].map((c) => ({ ...c, open: true }));

const done: Card[] = [
  ["Documentar guía de manejo", "versionado del repositorio"],
  ["Realizar resumen de las Issues"],
  ["Realizar informe de avance"],
  ["Realizar análisis de deuda"],
  ["Documentar detalle de registro"],
  ["Documentar registro total", "entrega"],
  ["Realizar retrospectiva"],
  ["Definir roles del equipo"],
  ["Definir marco general de"],
  ["Documentar primera versión", "ingeniería"],
  ["Crear templates para issues"],
  ["Documentar stand-up"],
  ["Documentar templates para"],
  ["Instalacion de proyecto en"],
].map((lines, i) => ({ id: "", lines, open: i === 11 }));

const columns: Column[] = [
  { name: "BACKLOG", count: 20, dot: "#3f9142", desc: "Tickets que no se empezaron", cards: backlog },
  { name: "To do", count: 0 },
  { name: "In Progress", count: 0, dot: "#9a6b1f", desc: "Tickets que no son user stories" },
  { name: "Requirements Definition", count: 0 },
  { name: "Test Cases Implementation", count: 0 },
  { name: "Application Implementation", count: 0 },
  { name: "Testing", count: 0, dot: "#b94d86" },
  { name: "Refactoring", count: 0 },
  { name: "DONE", count: 14, dot: "#8359d8", desc: "This has been completed", cards: done },
];

@customElement("board-column")
class BoardColumn extends LitElement {
  @property({ attribute: false }) column!: Column;

  static styles = css`
    :host {
      box-sizing: border-box;
      flex: none;
      width: 350px;
      border: 1.500px solid #20252c;
      border-radius: 6px;
      background: #010409;
      display: flex;
      flex-direction: column;
      white-space: nowrap;
      overflow: hidden;
    }
    svg { display: block; flex: none; }
    .head { display: flex; align-items: center; height: 22px; margin: 13px 19px 0 16px; }
    .dot { width: 16px; height: 16px; border-radius: 50%; margin-right: 8px; flex: none; }
    .name { font-size: 16px; font-weight: 600; color: #dde2e8; letter-spacing: -0.220px; }
    .count { margin-left: 8px; padding: 0 5px; min-width: 8px; height: 16.500px; border-radius: 9px; background: #2b3037; color: #a5adb7; font-size: 12px; font-weight: 600; line-height: 16.500px; text-align: center; letter-spacing: 0; }
    .menu { margin-left: auto; margin-top: -5px; }
    .desc { margin: 5px 16px 0; font-size: 14px; line-height: 21px; color: #8b949e; height: 21px; letter-spacing: -0.250px; }
    .list { flex: 1; min-height: 0; overflow: hidden; padding: 12px 8px 0; margin-bottom: 38px; display: flex; flex-direction: column; gap: 8px; }
    .card { flex: none; box-sizing: border-box; border: 1px solid #23282f; border-radius: 6px; background: #161a21; padding: 11px 0 0 12.500px; height: 68.200px; }
    .card.tall { height: 86.400px; }
    .ref { display: flex; align-items: center; gap: 3.500px; height: 18px; font-size: 12px; color: #8f98a2; letter-spacing: 0.130px; }
    .title { font-size: 14px; font-weight: 450; line-height: 18.200px; color: #dbe0e6; margin-top: 8px; letter-spacing: -0.220px; }
    .add { display: flex; align-items: center; gap: 9px; height: 22px; margin: 0 16px 9px; padding-left: 0.500px; font-size: 14px; color: #8b949e; margin-top: auto; letter-spacing: -0.080px; }
    .list + .add { margin-top: -29px; }
  `;

  render() {
    const c = this.column;
    return html`
      <div class="head">
        ${c.dot ? html`<span class="dot" style="background:${c.dot}"></span>` : nothing}
        <span class="name">${c.name}</span><span class="count">${c.count}</span>
        <span class="menu">${kebab}</span>
      </div>
      ${c.desc ? html`<div class="desc">${c.desc}</div>` : nothing}
      ${c.cards
        ? html`<div class="list">
            ${c.cards.map(
              (k) => html`<div class="card ${k.lines.length > 1 ? "tall" : ""}">
                ${k.lines.length
                  ? html`<div class="ref">${k.open ? issueOpen : issueClosed}<span>${REPO} ${k.id}</span></div>
                      <div class="title">${k.lines.map((l) => html`<div>${l}</div>`)}</div>`
                  : nothing}
              </div>`,
            )}
          </div>`
        : nothing}
      <div class="add">${plus()}<span>Add item</span></div>
    `;
  }
}

/* ---------- dock ---------- */

type DockApp = { art: string; running?: boolean; badge?: string };
const dockLeft: DockApp[] = [
  { art: "finder", running: true },
  { art: "launchpad" },
  { art: "docker" },
  { art: "mail", running: true, badge: "913" },
  { art: "terminal", running: true },
  { art: "chrome", running: true },
  { art: "vscode", running: true },
];
const dockRight: DockApp[] = [
  "teams", "dbeaver", "spotify", "slack", "elephant", "postman", "shutter",
  "notes", "numbers", "github", "pages", "preview", "vs",
].map((a) => ({ art: a, running: true }));

@customElement("app-root")
class AppRoot extends LitElement {
  static styles = css`
    :host {
      position: relative;
      display: flex;
      flex-direction: column;
      width: 3024px;
      height: 1964px;
      overflow: hidden;
      background: #05070b;
      font-family: Inter, "Liberation Sans", sans-serif;
      white-space: nowrap;
    }
    svg { display: block; flex: none; overflow: visible; }
    .wallpaper { position: absolute; left: 0; bottom: 0; z-index: 0; }

    .menubar {
      position: relative; height: 74px; flex: none; box-sizing: border-box; display: flex; align-items: center;
      padding: 0 34px 0 40px; background: linear-gradient(90deg, #7a8b9a, #7c8b9d 40%, #7d8c9e); color: #f3f5f7; font-size: 26px;
    }
    .menubar > * { filter: drop-shadow(0 3px 4px rgba(40, 50, 65, 0.35)); }
    .menubar .apple { margin-right: 40px; margin-top: -3px; }
    .menubar .m { flex: none; letter-spacing: -0.400px; margin-top: -1px; }
    .menubar .brand { font-weight: 700; width: 256px; letter-spacing: 0.050px; }
    .spacer { flex: 1; }
    .status { display: flex; align-items: center; }
    .status .cell { display: flex; justify-content: center; flex: none; }
    .clock { display: flex; gap: 15px; letter-spacing: 0.650px; margin-left: 9px; margin-top: -1px; }

    .frame { position: relative; flex: none; height: 1740px; margin-bottom: 4px; background: linear-gradient(#4b5967 0 40px, #000 40px); }
    .window {
      box-sizing: border-box; height: 1740px; border-radius: 20px 20px 22px 22px; overflow: hidden;
      border-top: 2px solid #000; background: #0d1117; display: flex; flex-direction: column;
    }
    .edge { position: absolute; inset: 2px 0 0 0; border-radius: 19px 19px 22px 22px; border: 1.500px solid rgba(255, 255, 255, 0.2); border-top: 2px solid rgba(255, 255, 255, 0.35); border-bottom-width: 2px; pointer-events: none; }

    .strip { flex: none; height: 84px; background: #3c3f42; display: flex; box-sizing: border-box; padding-left: 42px; }
    .lights { display: flex; gap: 16px; padding-top: 31px; width: 145px; box-sizing: border-box; }
    .light { width: 24px; height: 24px; border-radius: 50%; background: #5b5c5f; }
    .tab { flex: none; width: 104px; box-sizing: border-box; display: flex; align-items: center; padding-left: 15px; padding-top: 16px; }
    .tab.narrow { width: 102px; }
    .tab .ic { width: 32px; flex: none; }
    .tab .tx { margin-left: 16.500px; width: 26px; height: 34px; line-height: 34px; overflow: hidden; font-size: 24px; color: #d3d5d8; letter-spacing: -0.400px;
      -webkit-mask-image: linear-gradient(90deg, #000 55%, transparent); mask-image: linear-gradient(90deg, #000 55%, transparent); }
    .tab .tx.pic { -webkit-mask-image: none; mask-image: none; display: flex; align-items: center; overflow: visible; margin-left: 15px; }
    .tab .sep { width: 2px; height: 40px; background: #6c6f72; margin-left: auto; margin-right: -1px; }
    .tab.active { background: #35363a; margin-top: 14px; border-radius: 16px 16px 0 0; padding-top: 2px; position: relative; }
    .tab.active::before, .tab.active::after { content: ""; position: absolute; bottom: 0; width: 16px; height: 16px; }
    .tab.active::before { left: -16px; background: radial-gradient(circle at 0 0, transparent 15.500px, #35363a 16px); }
    .tab.active::after { right: -16px; background: radial-gradient(circle at 100% 0, transparent 15.500px, #35363a 16px); }
    .tab.active .x { margin-left: 17px; }
    .newtab { padding: 36px 0 0 33px; }
    .tabmenu { margin-left: auto; padding: 40px 34px 0 0; }

    .toolbar { flex: none; height: 74px; box-sizing: border-box; background: #35363a; border-bottom: 2px solid #5f6165; display: flex; align-items: center; padding: 0 30px 0 30px; }
    .toolbar .nav { display: flex; gap: 36px; width: 186px; }
    .omni { flex: none; width: 2528px; height: 56px; box-sizing: border-box; border-radius: 28px; background: #202124; display: flex; align-items: center; padding: 0 22px 0 27px; }
    .url { margin-left: 23px; font-size: 28px; color: #9a9da1; letter-spacing: -0.200px; }
    .url b { font-weight: 400; color: #fff; }
    .omni .tools { margin-left: auto; display: flex; gap: 36px; }
    .ext { display: flex; align-items: center; margin-left: 27px; gap: 28px; }
    .ext .media { margin-right: 7px; }
    .avatar { width: 44px; height: 44px; border-radius: 50%; background: #d84c78; color: #fff; font: 400 24px/44px Inter, sans-serif; text-align: center; }

    .gh { flex: none; height: 66px; box-sizing: border-box; background: #161b22; display: flex; align-items: center; padding: 0 32px; font-size: 14px; color: #f0f6fc; }
    .burger { width: 33px; height: 33px; box-sizing: border-box; border: 1px solid #30363d; border-radius: 6px; display: grid; place-items: center; margin-right: 17px; }
    .crumbs { display: flex; align-items: center; font-weight: 600; margin-left: 16px; letter-spacing: -0.520px; }
    .crumbs i { font-style: normal; font-weight: 400; color: #8b949e; width: 24px; text-align: center; }
    .crumbs .mid { letter-spacing: -0.250px; }
    .crumbs .cur { color: #b6bdc5; margin-left: 10px; letter-spacing: -0.100px; }
    .crumbs > svg { margin-left: 1px; }
    .search { width: 271px; height: 28px; box-sizing: border-box; border: 1px solid #30363d; border-radius: 6px; background: #0d1117; display: flex; align-items: center; justify-content: space-between; padding: 0 5px 0 11px; color: #d0d6dc; letter-spacing: -0.180px; }
    .key { width: 19px; height: 20px; box-sizing: border-box; border: 1px solid #484f58; border-radius: 3px; font-size: 11px; text-align: center; line-height: 18px; color: #8b949e; }
    .ghright { display: flex; align-items: center; width: 108px; margin-left: 32px; }

    .titlebar { flex: none; height: 85px; box-sizing: border-box; background: #010409; border-bottom: 1.500px solid #2b3036; padding: 7.500px 32px 0 33px; display: flex; flex-direction: column; justify-content: space-between; }
    .row { display: flex; align-items: center; }
    .ptitle { font-size: 20px; font-weight: 600; color: #d5dbe1; margin-left: 6px; margin-top: -1px; letter-spacing: -0.460px; }
    .group { margin-left: auto; display: flex; border: 1px solid #363b42; border-radius: 6px; background: #21262d; overflow: hidden; box-sizing: border-box; height: 32px; width: 99px; }
    .group > span { flex: 1; display: grid; place-items: center; }
    .group > span + span { border-left: 1px solid #363b42; }
    .views { display: flex; align-items: flex-end; margin-bottom: -1.500px; }
    .view { box-sizing: border-box; width: 124px; height: 36.500px; border: 1.500px solid #2b3036; border-bottom: 0; border-radius: 6px 6px 0 0; background: #0d1117; display: flex; align-items: center; padding-left: 15px; font-size: 14px; font-weight: 500; color: #dde2e8; letter-spacing: -0.400px; }
    .view b { font-weight: 500; margin: 0 8px; width: 41px; }
    .caret { width: 18px; height: 18px; border-radius: 5px; border: 1px solid #30363d; box-sizing: border-box; background: #21262d; display: grid; place-items: center; }
    .newview { display: flex; align-items: center; gap: 8px; height: 36px; margin-left: 13px; font-size: 14px; color: #8b949e; letter-spacing: -0.200px; }

    .filter { flex: none; display: flex; align-items: center; height: 72px; padding: 0 16.500px; box-sizing: border-box; }
    .fbox { width: 2850px; height: 32px; box-sizing: border-box; border: 1.500px solid #2c3138; border-radius: 6px; display: flex; align-items: center; padding-left: 12px; gap: 7px; font-size: 14px; color: #959ea8; letter-spacing: -0.230px; margin-top: -7px; }
    .undo { margin: -7px 14px 0; }
    .save { width: 98px; height: 28px; box-sizing: border-box; border: 1.500px solid #1f252d; border-radius: 6px; color: #335797; font-size: 12px; font-weight: 500; line-height: 25px; text-align: center; margin-top: -7px; }

    .board { flex: none; height: 1350.500px; display: flex; gap: 7.900px; margin-left: -23.500px; width: 3300px; }

    .dock { position: relative; z-index: 1; flex: none; box-sizing: border-box; width: 2831px; height: 136px; margin-left: 97px; border: 1.500px solid #47494b; border-radius: 42px; padding-left: 4px;
      background: linear-gradient(90deg, #202225, #1b1e24 30%, #1b1e25 45%, #1c1c20 62%, #1e1e21 78%, #2a2526 92%, #282325); display: flex; }
    .slot { position: relative; flex: none; width: 113.300px; display: flex; flex-direction: column; align-items: center; padding-top: 18.500px; box-sizing: border-box; }
    .run { width: 9px; height: 9px; border-radius: 50%; background: #98989d; margin-top: 18.500px; }
    .badge { position: absolute; top: 7.500px; right: 1px; width: 45px; height: 40px; border-radius: 20px; background: rgba(226, 75, 62, 0.96); color: #fff; font: 400 21.500px/40px Inter, sans-serif; text-align: center; letter-spacing: -0.500px; }
    .rule { flex: none; width: 51px; display: flex; justify-content: center; padding-top: 16px; }
    .rule::before { content: ""; width: 2px; height: 100px; background: #4d4f53; }
    .folder { margin-top: 3px; }
    .trash { margin-top: -8px; }
    .mini-badge { position: absolute; left: 71px; top: 76px; }
  `;

  private menubar() {
    return html`<div class="menubar">
      <svg class="apple" width="27" height="32" viewBox="3.500 0 17 24" preserveAspectRatio="none"><path fill="#f5f6f8" d="M12.152 6.896c-.948 0-2.415-1.078-3.96-1.04-2.04.027-3.91 1.183-4.961 3.014-2.117 3.675-.546 9.103 1.519 12.09 1.013 1.454 2.208 3.09 3.792 3.039 1.52-.065 2.09-.987 3.935-.987 1.831 0 2.35.987 3.96.948 1.637-.026 2.676-1.48 3.676-2.948 1.156-1.688 1.636-3.325 1.662-3.415-.039-.013-3.182-1.221-3.22-4.857-.026-3.04 2.48-4.494 2.597-4.559-1.429-2.09-3.623-2.324-4.39-2.376-2-.156-3.675 1.09-4.61 1.09zM15.53 3.83c.843-1.012 1.4-2.427 1.245-3.83-1.207.052-2.662.805-3.532 1.818-.78.896-1.454 2.338-1.273 3.714 1.338.104 2.715-.688 3.559-1.701" /></svg>
      <span class="m brand">Microsoft Teams</span>
      <span class="m" style="width:88px">Edit</span><span class="m" style="width:100px">View</span>
      <span class="m" style="width:138px">Window</span><span class="m">Help</span>
      <span class="spacer"></span>
      <div class="status">
        <span class="cell" style="width:65px"><svg width="30" height="30" viewBox="0 0 30 30"><path fill="#f3f5f7" fill-rule="evenodd" d="M5 0h20q5 0 5 5v20q0 5-5 5H5q-5 0-5-5V5q0-5 5-5zM17 4q-2 0-2 2v18q0 2 2 2h8q1.500 0 1.500-2V6q0-2-1.500-2z" /></svg></span>
        <span class="cell" style="width:65px"><svg width="30" height="30" viewBox="0 0 30 30"><path d="M0 0h30v30H0z" fill="#f3f5f7" /><path d="M15 8l6 3 2 6-4 6-6 1-5-4-1-7z" fill="#7c8b9d" /><path d="M12 0l-3 15M30 2L10 9M30 16L17 8M26 30l-4-15M13 30l8-9M0 23h18M8 22L0 8" stroke="#7c8b9d" stroke-width="1.600" /></svg></span>
        <span class="cell" style="width:63px"><svg width="18" height="28" viewBox="0 0 18 28" fill="none" stroke="#f3f5f7" stroke-width="2.200" stroke-linejoin="round"><path d="M1 7.500l15 13-7 6V1.500l7 6-15 13" /></svg></span>
        <span class="cell" style="width:66px"><svg width="28" height="28" viewBox="0 0 28 28"><circle cx="14" cy="14" r="12.500" fill="none" stroke="#f3f5f7" stroke-width="2.200" /><path d="M10 8l10 6-10 6z" fill="#f3f5f7" /></svg></span>
        <span class="cell" style="width:81px"><svg width="52" height="26" viewBox="0 0 52 26"><rect x="1" y="1.500" width="45" height="22" rx="6.500" fill="none" stroke="#b6c0cb" stroke-width="2" /><rect x="4.500" y="5" width="16" height="15" rx="3" fill="#f3f5f7" /><path d="M48.500 8.500q3 1 3 4t-3 4z" fill="#b6c0cb" /></svg></span>
        <span class="cell" style="width:75px"><svg width="33" height="25" viewBox="0 0 33 25"><g fill="none" stroke="#f3f5f7" stroke-width="4"><path d="M1.500 9.500a21.500 21.500 0 0 1 30 0" /><path d="M7 15.500a13.500 13.500 0 0 1 19 0" /></g><path d="M16.500 25l-5-5.500q5-4.500 10 0z" fill="#f3f5f7" /></svg></span>
        <span class="cell" style="width:62px"><svg width="27" height="27" viewBox="0 0 27 27" fill="none" stroke="#f3f5f7" stroke-width="2.400"><circle cx="11" cy="11" r="9.300" /><path d="M17.500 17.500l8 8" stroke-linecap="round" /></svg></span>
        <span class="cell" style="width:50px"><svg width="28" height="27" viewBox="0 0 28 27"><rect x="1" y="1" width="26" height="11" rx="5.500" fill="none" stroke="#f3f5f7" stroke-width="2" /><circle cx="7" cy="6.500" r="3.500" fill="#f3f5f7" /><rect y="14.500" width="28" height="12.500" rx="6.250" fill="#f3f5f7" /><circle cx="21" cy="20.750" r="4" fill="#7c8b9d" /></svg></span>
        <span class="cell" style="width:8px"><svg width="10" height="10" viewBox="0 0 10 10"><circle cx="5" cy="6.500" r="5" fill="#e29a3e" /></svg></span>
        <span class="cell" style="width:74px"><svg width="28" height="28" viewBox="0 0 28 28">
          <defs><radialGradient id="si"><stop offset="0" stop-color="#f4f8ff" /><stop offset=".3" stop-color="#8fb0e0" /><stop offset=".8" stop-color="#2b3564" /><stop offset="1" stop-color="#1f2748" /></radialGradient></defs>
          <circle cx="14" cy="14" r="14" fill="url(#si)" /><path d="M5 6a13 13 0 0 0-1 16q8-2 9-8-2-6-8-8z" fill="#e0457d" opacity=".75" /><path d="M7 4a13 13 0 0 1 15 1q-3 6-8 8-6-3-7-9z" fill="#3a9a68" opacity=".7" /><path d="M8 25a13 13 0 0 0 17-4q-4-6-11-6z" fill="#38b9dd" opacity=".65" /><circle cx="14" cy="14" r="3.500" fill="#fff" opacity=".75" /></svg></span>
        <span class="clock"><span>Sat 15 Apr</span><span>13:35</span></span>
      </div>
    </div>`;
  }

  private tabStrip() {
    return html`<div class="strip">
      <div class="lights"><span class="light"></span><span class="light"></span><span class="light"></span></div>
      ${tabs.map((t) =>
        t.active
          ? html`<div class="tab active"><span class="ic">${t.icon}</span>
              <svg class="x" width="17" height="17" viewBox="0 0 17 17"><path d="M1 1l15 15M16 1L1 16" stroke="#d8dadc" stroke-width="2.400" /></svg></div>`
          : html`<div class="tab ${t.narrow ? "narrow" : ""}"><span class="ic">${t.icon}</span>
              <span class="tx ${typeof t.text === "string" ? "" : "pic"}">${t.text}</span>${t.bare ? nothing : html`<span class="sep"></span>`}</div>`,
      )}
      <div class="newtab"><svg width="24" height="24" viewBox="0 0 24 24"><path d="M12 0v24M0 12h24" stroke="#e2e3e4" stroke-width="3.400" /></svg></div>
      <div class="tabmenu"><svg width="20" height="14" viewBox="0 0 20 14"><path d="M2 2l8 9 8-9" stroke="#e2e3e4" stroke-width="2.800" fill="none" /></svg></div>
    </div>`;
  }

  private toolbar() {
    return html`<div class="toolbar">
      <div class="nav">
        <svg width="28" height="28" viewBox="0 0 28 28" fill="none" stroke="#8a8c8f" stroke-width="2.600"><path d="M27 14H3M14 2L2 14l12 12" /></svg>
        <svg width="28" height="28" viewBox="0 0 28 28" fill="none" stroke="#8a8c8f" stroke-width="2.600"><path d="M1 14h24M14 2l12 12-12 12" /></svg>
        <svg width="28" height="28" viewBox="0 0 28 28" fill="none" stroke="#8a8c8f" stroke-width="2.800"><path d="M24.500 19.500A12 12 0 1 1 23 6.500l2 3" /><path d="M28 .500V12H16.500z" fill="#8a8c8f" stroke="none" /></svg>
      </div>
      <div class="omni">
        <svg width="18" height="22" viewBox="0 0 18 22"><rect y="7.500" width="18" height="14" rx="2" fill="#a0a4a8" /><path d="M4 9V5.500a5 5 0 0 1 10 0V9" fill="none" stroke="#a0a4a8" stroke-width="2.200" /></svg>
        <span class="url"><b>github.com</b>/users/sofiabegino/projects/1/views/1</span>
        <div class="tools">
          <svg width="28" height="28" viewBox="0 0 28 28" fill="none" stroke="#c8cacd" stroke-width="2.600"><path d="M11 2H3.500Q1.500 2 1.500 4v15q0 2 2 2H25q2 0 2-2v-3" /><path d="M19.500 0v15M13.500 9.500l6 6 6-6" /><path d="M6 25.500h16" stroke-width="5" /></svg>
          <svg width="28" height="28" viewBox="0 0 28 28" fill="none" stroke="#c8cacd" stroke-width="2.600"><circle cx="11.500" cy="11" r="9.500" /><path d="M18 18l8.500 8.500M7 11h9" /></svg>
          <svg width="28" height="30" viewBox="0 0 28 30" fill="none" stroke="#c8cacd" stroke-width="2.600"><path d="M9 10H4.500v18h19V10H19M14 21V3M8.500 8L14 2l5.500 6" /></svg>
          <svg width="28" height="28" viewBox="0 0 28 28" fill="none" stroke="#c8cacd" stroke-width="2.400"><path d="M14 2.500l3.500 8.300 9 .8-6.800 5.900 2 8.800-7.700-4.700-7.700 4.700 2-8.800L1.500 11.600l9-.8z" /></svg>
        </div>
      </div>
      <div class="ext">
        <svg class="media" width="32" height="26" viewBox="0 0 32 26" fill="#8f9194"><path d="M0 1h19v3H0zM0 8.500h19v3H0zM0 16h12v3H0z" /><circle cx="21" cy="20.500" r="4.800" /><path d="M23 2h9v3.500h-6V21h-3z" /></svg>
        <svg width="28" height="28" viewBox="0 0 28 28"><path fill-rule="evenodd" fill="#8f9194" d="M0 0h28v28H0zM3.500 4v20H18V4z" /></svg>
        <span class="avatar">S</span>
        <svg width="28" height="28" viewBox="0 0 28 28" fill="#8f9194"><circle cx="14" cy="3.500" r="3" /><circle cx="14" cy="14" r="3" /><circle cx="14" cy="24.500" r="3" /></svg>
      </div>
    </div>`;
  }

  private github() {
    return html`<div class="gh">
        <span class="burger"><svg width="14" height="14" viewBox="0 0 14 14"><path d="M0 2h14M0 7.200h14M0 12.400h14" stroke="#e6edf3" stroke-width="1.500" /></svg></span>
        ${octocat(32, "#f0f6fc")}
        <div class="crumbs">
          <span>sofiabegino</span><i>/</i><span class="mid">Projects</span><i>/</i>
          <svg width="16" height="16" viewBox="0 0 16 16" fill="none" stroke="#8b949e" stroke-width="1.500"><rect x=".75" y=".75" width="14.500" height="14.500" rx="1.500" /><path d="M5.700 1v14M1 5.700h14" /></svg>
          <span class="cur">Isa2 Obligatorio</span>
        </div>
        <span class="spacer"></span>
        <div class="search"><span>Search or jump to...</span><span class="key">/</span></div>
        <div class="ghright">
          <svg width="108" height="28" viewBox="0 0 108 28">
            <path d="M3.200 18.800l2.200-3.600V11a4.600 4.600 0 0 1 9.200 0v4.200l2.200 3.600zM8.300 21.500a2 2 0 0 0 3.600 0" fill="none" stroke="#d8dee4" stroke-width="1.500" />
            <circle cx="14.500" cy="6.500" r="5.200" fill="#4f8ff0" />
            <path d="M40.500 8.500v12M34.500 14.500h12" stroke="#e6edf3" stroke-width="1.500" /><path d="M52.500 13h8l-4 4.500z" fill="#e6edf3" />
            <circle cx="86" cy="14.500" r="10.500" fill="#37383a" /><path d="M82 24c-1-8 1-12 3-13l1-3 2 3c2 1 4 5 3 13z" fill="#0a0a0c" /><circle cx="86.300" cy="9" r="1.700" fill="#8d8078" /><path d="M84 16h5" stroke="#66615d" />
            <circle cx="96" cy="5" r="5.200" fill="#4f8ff0" /><path d="M100 13h8l-4 4.500z" fill="#e6edf3" />
          </svg>
        </div>
      </div>
      <div class="titlebar">
        <div class="row">
          <svg width="13" height="16" viewBox="0 0 13 16" fill="none" stroke="#7d8590" stroke-width="1.400"><rect x=".8" y="6.800" width="11.400" height="8.200" rx="1.500" /><path d="M3.200 6.500V4a3.200 3.200 0 0 1 6.600 0v2.500" /></svg>
          <span class="ptitle">Isa2 Obligatorio</span>
          <div class="group">
            <span><svg width="16" height="16" viewBox="0 0 16 16" fill="none" stroke="#c9d1d9" stroke-width="1.500"><path d="M.75 1v13.250H16" /><path d="M3.500 10.500l3-4 3 2.500 5-6" /></svg></span>
            <span><svg width="16" height="16" viewBox="0 0 16 16" fill="none" stroke="#c9d1d9" stroke-width="1.500"><rect x=".75" y=".75" width="14.500" height="14.500" rx="1" /><path d="M10.500 1v14" /><path d="M8 5v6L4.500 8z" fill="#c9d1d9" stroke="none" /></svg></span>
            <span><svg width="16" height="16" viewBox="0 0 16 16" fill="#c9d1d9"><circle cx="1.800" cy="8" r="1.400" /><circle cx="8" cy="8" r="1.400" /><circle cx="14.200" cy="8" r="1.400" /></svg></span>
          </div>
        </div>
        <div class="views">
          <div class="view">
            <svg width="16" height="16" viewBox="0 0 16 16" fill="none" stroke="#d5dbe1" stroke-width="1.500"><rect x=".75" y=".75" width="14.500" height="14.500" rx="1" /><path d="M4.700 3.500v7M8 3.500v4M11.300 3.500v8" /></svg>
            <b>View 1</b>
            <span class="caret"><svg width="8" height="5" viewBox="0 0 8 5"><path d="M0 0h8L4 5z" fill="#c9d1d9" /></svg></span>
          </div>
          <div class="newview">${plus("#858e99")}<span>New View</span></div>
        </div>
      </div>
      <div class="filter">
        <div class="fbox"><svg width="16" height="16" viewBox="0 0 16 16"><path d="M0 3h16M3 7.800h10M6 12.600h4" stroke="#7d8590" stroke-width="1.500" /></svg><span>Filter by keyword or by field</span></div>
        <svg class="undo" width="16" height="16" viewBox="0 0 16 16" fill="none" stroke="#7d8590" stroke-width="1.500"><path d="M6 1.500L1.800 5.700 6 9.900M2 5.700h6.500a5 5 0 0 1 5 5V14" /></svg>
        <div class="save">Save changes</div>
      </div>
      <div class="board">${columns.map((c) => html`<board-column .column=${c}></board-column>`)}</div>`;
  }

  private dockItem(a: DockApp) {
    return html`<div class="slot"><svg width="85" height="85" viewBox="0 0 85 85">${art[a.art]}</svg>
      ${a.running ? html`<span class="run"></span>` : nothing}${a.badge ? html`<span class="badge">${a.badge}</span>` : nothing}</div>`;
  }

  render() {
    return html`
      <svg class="wallpaper" width="3024" height="160" viewBox="0 0 3024 160">
        <defs>
          <linearGradient id="haze" x1="0" y1="0" x2="0" y2="1"><stop offset="0" stop-color="#020203" /><stop offset=".5" stop-color="#0c1118" /><stop offset="1" stop-color="#12151a" /></linearGradient>
          <filter id="grain" x="0" y="0" width="1" height="1"><feTurbulence type="fractalNoise" baseFrequency=".04 .09" numOctaves="4" seed="4" /><feColorMatrix values="0 0 0 0 .03  0 0 0 0 .02  0 0 0 0 .02  0 0 0 3.500 -1.500" /><feComposite in2="SourceGraphic" operator="in" /></filter>
          <filter id="soft" x="-.1" y="-.3" width="1.200" height="1.600"><feGaussianBlur stdDeviation="5" /></filter>
        </defs>
        <rect width="3024" height="160" fill="#05070c" />
        <rect width="460" height="160" fill="url(#haze)" />
        <path d="M0 88l60-14 60 26 300 46 500 8v6H0z" fill="#161716" /><path d="M0 88l60-14 60 26 300 46 500 8v6H0z" filter="url(#grain)" />
        <path d="M2560 160l120-20 160 6 60-106 28 4 46 18 50 22v76z" fill="#1b1718" />
        <path d="M2900 36l28 8 22 6 22 10 24 13 28 10v44l-24-10-30-16-42-21-28-6z" fill="#68402e" />
        <path d="M2890 88l38 4 40 24 70 26v38H2890z" fill="#1c1718" filter="url(#soft)" />
        <path d="M2900 36l28 8 22 6 22 10 24 13 28 10v77H2900z" filter="url(#grain)" />
        <path d="M2862 160q6-9 16-4l8 4z" fill="#6b4a3a" />
      </svg>
      ${this.menubar()}
      <div class="frame">
        <div class="window">${this.tabStrip()}${this.toolbar()}${this.github()}</div>
        <div class="edge"></div>
      </div>
      <div class="dock">
        ${dockLeft.map((a) => this.dockItem(a))}
        <span class="rule"></span>
        ${dockRight.map((a) => this.dockItem(a))}
        <span class="rule"></span>
        <div class="slot">${downloads}</div>
        <div class="slot">${miniFinder}${miniElephant}</div>
        <div class="slot">${miniEditor}${miniVs}</div>
        <div class="slot">${trash}</div>
      </div>
    `;
  }
}
